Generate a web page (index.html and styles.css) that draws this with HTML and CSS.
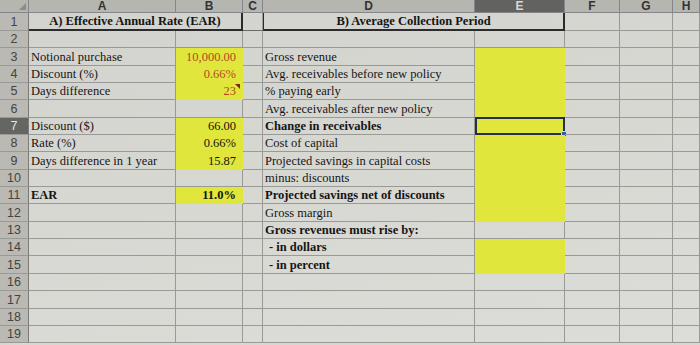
FILE: index.html
```html
<!DOCTYPE html>
<html>
<head>
<meta charset="utf-8">
<link rel="stylesheet" href="styles.css">
</head>
<body>
<table class="sheet">
  <colgroup>
    <col class="w-rn"><col class="w-a"><col class="w-b"><col class="w-c"><col class="w-d"><col class="w-e"><col class="w-f"><col class="w-g"><col class="w-h">
  </colgroup>
  <tr class="hdr">
    <td class="corner"></td><td class="ch">A</td><td class="ch">B</td><td class="ch">C</td><td class="ch">D</td><td class="ch sel-col">E</td><td class="ch">F</td><td class="ch">G</td><td class="ch">H</td>
  </tr>
  <tr class="r1">
    <td class="rn">1</td><td colspan="2" class="title box">A) Effective Annual Rate (EAR)</td><td class="box-c"></td><td colspan="2" class="title box box-l">B) Average Collection Period</td><td></td><td></td><td></td>
  </tr>
  <tr><td class="rn">2</td><td></td><td></td><td></td><td></td><td></td><td></td><td></td><td></td></tr>
  <tr><td class="rn">3</td><td class="lbl">Notional purchase</td><td class="num hl inp">10,000.00</td><td></td><td class="lbl">Gross revenue</td><td class="hl"></td><td></td><td></td><td></td></tr>
  <tr><td class="rn">4</td><td class="lbl">Discount (%)</td><td class="num hl inp">0.66%</td><td></td><td class="lbl">Avg. receivables before new policy</td><td class="hl"></td><td></td><td></td><td></td></tr>
  <tr><td class="rn">5</td><td class="lbl">Days difference</td><td class="num hl inp note">23</td><td></td><td class="lbl">% paying early</td><td class="hl"></td><td></td><td></td><td></td></tr>
  <tr><td class="rn">6</td><td></td><td></td><td></td><td class="lbl">Avg. receivables after new policy</td><td class="hl"></td><td></td><td></td><td></td></tr>
  <tr><td class="rn sel-row">7</td><td class="lbl">Discount ($)</td><td class="num hl">66.00</td><td></td><td class="lbl b">Change in receivables</td><td class="hl active"></td><td></td><td></td><td></td></tr>
  <tr><td class="rn">8</td><td class="lbl">Rate (%)</td><td class="num hl">0.66%</td><td></td><td class="lbl">Cost of capital</td><td class="hl"></td><td></td><td></td><td></td></tr>
  <tr><td class="rn">9</td><td class="lbl">Days difference in 1 year</td><td class="num hl">15.87</td><td></td><td class="lbl">Projected savings in capital costs</td><td class="hl"></td><td></td><td></td><td></td></tr>
  <tr><td class="rn">10</td><td></td><td></td><td></td><td class="lbl">minus: discounts</td><td class="hl"></td><td></td><td></td><td></td></tr>
  <tr><td class="rn">11</td><td class="lbl b">EAR</td><td class="num hl b">11.0%</td><td></td><td class="lbl b">Projected savings net of discounts</td><td class="hl"></td><td></td><td></td><td></td></tr>
  <tr><td class="rn">12</td><td></td><td></td><td></td><td class="lbl">Gross margin</td><td class="hl"></td><td></td><td></td><td></td></tr>
  <tr><td class="rn">13</td><td></td><td></td><td></td><td class="lbl b">Gross revenues must rise by:</td><td></td><td></td><td></td><td></td></tr>
  <tr><td class="rn">14</td><td></td><td></td><td></td><td class="lbl b ind">- in dollars</td><td class="hl"></td><td></td><td></td><td></td></tr>
  <tr><td class="rn">15</td><td></td><td></td><td></td><td class="lbl b ind">- in percent</td><td class="hl"></td><td></td><td></td><td></td></tr>
  <tr><td class="rn">16</td><td></td><td></td><td></td><td></td><td></td><td></td><td></td><td></td></tr>
  <tr><td class="rn">17</td><td></td><td></td><td></td><td></td><td></td><td></td><td></td><td></td></tr>
  <tr><td class="rn">18</td><td></td><td></td><td></td><td></td><td></td><td></td><td></td><td></td></tr>
  <tr><td class="rn">19</td><td></td><td></td><td></td><td></td><td></td><td></td><td></td><td></td></tr>
</table>
</body>
</html>
```

FILE: styles.css
```css
html, body {
  margin: 0;
  padding: 0;
  background: #d8d8d3;
  overflow: hidden;
}

.sheet {
  table-layout: fixed;
  border-collapse: separate;
  border-spacing: 0;
  width: 700px;
  background: linear-gradient(170deg, #d2d2ce 0%, #d8d8d3 50%, #dcdcd8 100%);
  font-family: "Liberation Serif", "Times New Roman", serif;
  font-size: 12.5px;
  color: #151515;
}

.w-rn { width: 29px; }
.w-a { width: 147px; }
.w-b { width: 67px; }
.w-c { width: 20px; }
.w-d { width: 212px; }
.w-e { width: 90px; }
.w-f { width: 55px; }
.w-g { width: 53px; }
.w-h { width: 27px; }

.sheet tr { height: 17.35px; }
.sheet tr.hdr { height: 13px; }
.sheet tr.r1 { height: 18px; }

.sheet td {
  box-sizing: border-box;
  padding: 0 3px 1px 3px;
  border-right: 1px solid #999996;
  border-bottom: 1px solid #999996;
  vertical-align: bottom;
  line-height: 14px;
  white-space: nowrap;
  overflow: visible;
  position: relative;
}

.hdr td {
  background: #b6b6b1;
  border-right: 1px solid #85858a;
  border-bottom: 1px solid #85858a;
  font-family: "Liberation Sans", Arial, sans-serif;
  font-weight: bold;
  font-size: 12px;
  color: #333;
  text-align: center;
  line-height: 11px;
  padding: 0;
}

.hdr td.sel-col {
  background: #626260;
  color: #d8d8d4;
}

.corner {
  background: #b4b4af;
}
.corner::after {
  content: "";
  position: absolute;
  right: 2px;
  bottom: 2px;
  border-style: solid;
  border-width: 0 0 7px 7px;
  border-color: transparent transparent #8c8c88 transparent;
}

.rn {
  background: #bab9b4;
  border-right: 1px solid #7a7a78 !important;
  font-family: "Liberation Sans", Arial, sans-serif;
  font-size: 12.5px;
  color: #444442;
  text-align: center;
  padding: 0 0 1px 0 !important;
}

.rn.sel-row {
  background: #656561;
  color: #e4e4e0;
}

.title {
  font-weight: bold;
  text-align: center;
  font-size: 12.5px;
}

.box {
  border-right: 2px solid #2b2b2b !important;
  border-bottom: 2px solid #2b2b2b !important;
}
.box-l {
  border-left: 1px solid #2b2b2b;
}
.box-c {
  border-bottom: 1px solid #6a6a68 !important;
}

.lbl {
  text-align: left;
  padding-left: 2px !important;
}

.ind {
  padding-left: 6px !important;
}

.num {
  text-align: right;
  padding-right: 6px !important;
}

.b {
  font-weight: bold;
}

.hl {
  background: #e1e63c;
  border-right-color: #e1e63c !important;
  border-bottom-color: #e1e63c !important;
}

.inp {
  color: #b34a1c;
}

.note::after {
  content: "";
  position: absolute;
  top: 1px;
  right: 2px;
  border-style: solid;
  border-width: 0 5px 5px 0;
  border-color: transparent #7a2a12 transparent transparent;
}

.active::before {
  content: "";
  position: absolute;
  left: 0;
  top: -1px;
  right: -1px;
  bottom: -1px;
  border: 2px solid #23304a;
}
.active::after {
  content: "";
  position: absolute;
  right: -3px;
  bottom: -3px;
  width: 4px;
  height: 4px;
  background: #2f5fa8;
  border: 1px solid #d8d8d3;
}
```
